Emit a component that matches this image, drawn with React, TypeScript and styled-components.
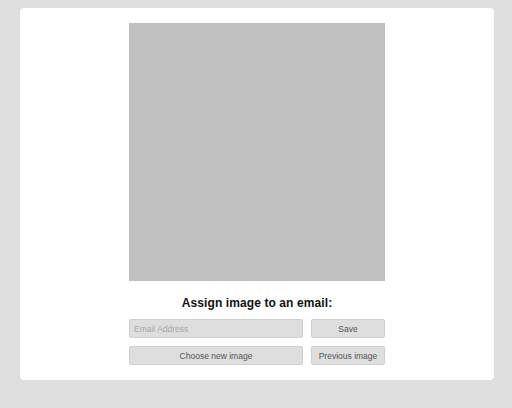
import React from "react";
import styled, { createGlobalStyle } from "styled-components";

const Global = createGlobalStyle`
  html, body { margin: 0; padding: 0; background: #dedede; }
  body { font-family: "Liberation Sans", Arial, sans-serif; }
`;

const Page = styled.div`
  padding: 8px 18px 0 20px;
`;

const Card = styled.div`
  background: #fff;
  border-radius: 4px;
  height: 372px;
  box-sizing: border-box;
  padding-top: 15px;
  display: flex;
  flex-direction: column;
  align-items: center;
`;

const ImageBox = styled.div`
  width: 256px;
  height: 258px;
  background: #c0c0c0;
`;

const Heading = styled.h2`
  margin: 15px 0 0;
  font-size: 12px;
  font-weight: bold;
  color: #111;
  line-height: 15px;
  letter-spacing: 0.1px;
`;

const Form = styled.div`
  margin-top: 8px;
  width: 256px;
  display: grid;
  grid-template-columns: 174px 74px;
  column-gap: 8px;
  row-gap: 8px;
`;

const Input = styled.input`
  box-sizing: border-box;
  height: 19px;
  border: 1px solid #cfcfcf;
  border-radius: 2px;
  background: #dedede;
  font-family: "Liberation Sans", Arial, sans-serif;
  font-size: 8.5px;
  padding: 0 4px;
  outline: none;
  &::placeholder { color: #a8a8a8; }
`;

const Button = styled.button`
  box-sizing: border-box;
  height: 19px;
  border: 1px solid #cfcfcf;
  border-radius: 2px;
  background: #dedede;
  font-family: "Liberation Sans", Arial, sans-serif;
  font-size: 8.5px;
  color: #555;
  padding: 0;
  cursor: pointer;
`;

export default function App() {
  return (
    <>
      <Global />
      <Page>
        <Card>
          <ImageBox />
          <Heading>Assign image to an email:</Heading>
          <Form>
            <Input placeholder="Email Address" />
            <Button>Save</Button>
            <Button>Choose new image</Button>
            <Button>Previous image</Button>
          </Form>
        </Card>
      </Page>
    </>
  );
}
